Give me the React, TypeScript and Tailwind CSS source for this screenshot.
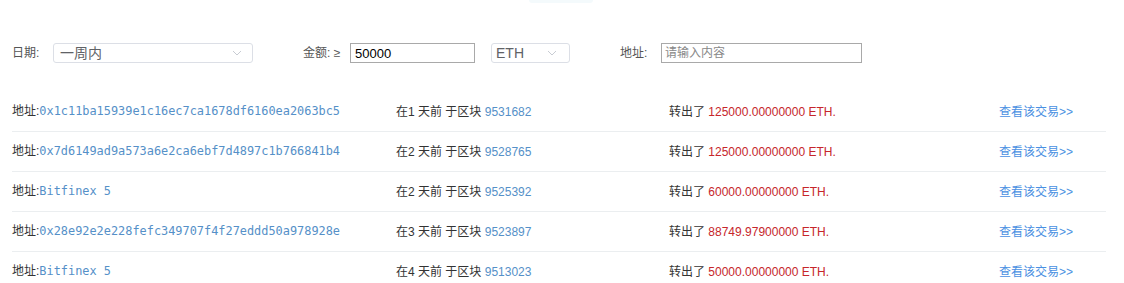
import React from "react";

const rows = [
  { addr: "0x1c11ba15939e1c16ec7ca1678df6160ea2063bc5", days: 1, block: "9531682", amt: "125000.00000000" },
  { addr: "0x7d6149ad9a573a6e2ca6ebf7d4897c1b766841b4", days: 2, block: "9528765", amt: "125000.00000000" },
  { addr: "Bitfinex 5", days: 2, block: "9525392", amt: "60000.00000000" },
  { addr: "0x28e92e2e228fefc349707f4f27eddd50a978928e", days: 3, block: "9523897", amt: "88749.97900000" },
  { addr: "Bitfinex 5", days: 4, block: "9513023", amt: "50000.00000000" },
];

const font = { fontFamily: '"Liberation Sans", "Noto Sans CJK SC", sans-serif' };

function Chevron() {
  return (
    <svg width="10" height="6" viewBox="0 0 10 6" fill="none">
      <path d="M1 1L5 5L9 1" stroke="#c8ccd3" strokeWidth="1" />
    </svg>
  );
}

export default function App() {
  return (
    <div className="w-[1124px] h-[283px] overflow-hidden bg-white text-[#333] font-['Liberation_Sans','Noto_Sans_CJK_SC',sans-serif]" style={font}>
      <div className="h-[43px] flex justify-center">
        <div className="ml-[-2px] w-[64px] h-[3px] bg-[#f4fafc] rounded-b" />
      </div>
      <div className="flex items-center h-[20px] pl-[12px] text-[12px]">
        <span className="w-[41px] text-[#555]">日期:</span>
        <div className="w-[200px] h-[20px] border border-[#dcdfe6] rounded-[3px] flex items-center justify-between pl-[6px] pr-[10px]">
          <span className="text-[14px] text-[#606266] leading-none">一周内</span>
          <Chevron />
        </div>
        <span className="ml-[50px] w-[47px] text-[#555]">金额: ≥</span>
        <div className="w-[125px] h-[20px] border border-[#a9a9a9] flex items-center pl-[4px]">
          <span className="text-[13px] text-black leading-none">50000</span>
        </div>
        <div className="ml-[16px] w-[79px] h-[20px] border border-[#dcdfe6] rounded-[3px] flex items-center justify-between pl-[4px] pr-[12px]">
          <span className="text-[14px] text-[#606266] leading-none">ETH</span>
          <Chevron />
        </div>
        <span className="ml-[50px] w-[41px] text-[#555]">地址:</span>
        <div className="w-[201px] h-[20px] border border-[#a9a9a9] flex items-center pl-[3px]">
          <span className="text-[12px] text-[#888] leading-none">请输入内容</span>
        </div>
      </div>
      <div className="mt-[29px] pl-[12px] w-[1106px]">
        {rows.map((r, i) => (
          <div key={i} className="flex items-center h-[40px] border-b border-[#ebeef0] text-[12px]">
            <div className="w-[384px] whitespace-nowrap">
              <span>地址:</span>
              <span className="text-[#5590c8] text-[11.9px] font-['DejaVu_Sans_Mono',monospace]" style={{ fontFamily: '"DejaVu Sans Mono", monospace' }}>{r.addr}</span>
            </div>
            <div className="w-[273px] whitespace-nowrap">
              在{r.days} 天前 于区块 <span className="text-[#5590c8]">{r.block}</span>
            </div>
            <div className="w-[330px] whitespace-nowrap">
              转出了 <span className="text-[#c6262b]">{r.amt} ETH.</span>
            </div>
            <div className="text-[#4a90e2] whitespace-nowrap">查看该交易&gt;&gt;</div>
          </div>
        ))}
      </div>
    </div>
  );
}
